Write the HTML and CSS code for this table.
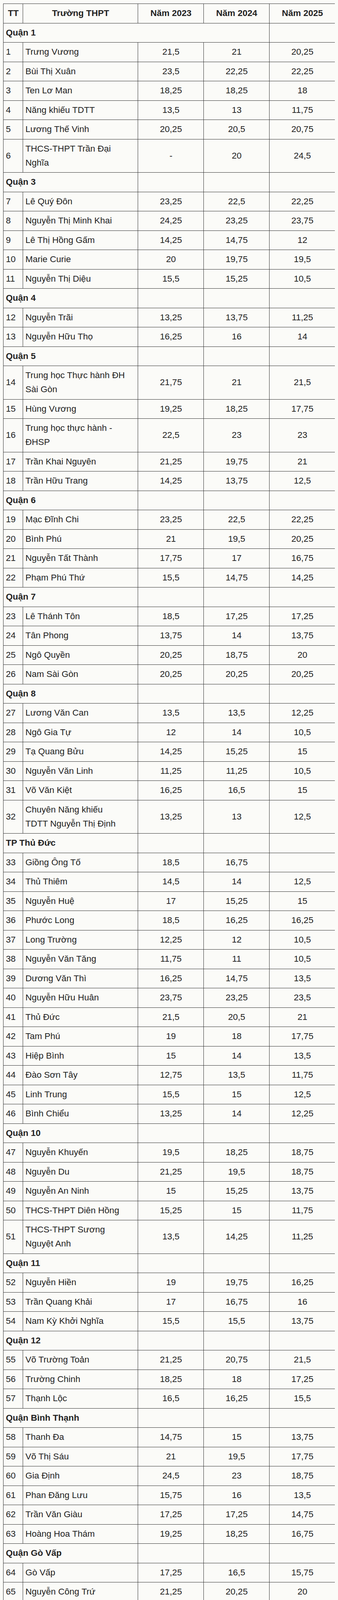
FILE: index.html
```html
<!DOCTYPE html>
<html lang="vi">
<head>
<meta charset="utf-8">
<title>Điểm chuẩn lớp 10</title>
<link rel="stylesheet" href="styles.css">
</head>
<body>
<table class="scores">
<colgroup><col class="c-tt"><col class="c-name"><col class="c-y"><col class="c-y"><col class="c-y"></colgroup>
<thead>
<tr><th>TT</th><th>Trường THPT</th><th>Năm 2023</th><th>Năm 2024</th><th>Năm 2025</th></tr>
</thead>
<tbody>
<tr><td class="district" colspan="4">Quận 1</td><td></td></tr>
<tr><td>1</td><td>Trưng Vương</td><td class="v">21,5</td><td class="v">21</td><td class="v">20,25</td></tr>
<tr><td>2</td><td>Bùi Thị Xuân</td><td class="v">23,5</td><td class="v">22,25</td><td class="v">22,25</td></tr>
<tr><td>3</td><td>Ten Lơ Man</td><td class="v">18,25</td><td class="v">18,25</td><td class="v">18</td></tr>
<tr><td>4</td><td>Năng khiếu TDTT</td><td class="v">13,5</td><td class="v">13</td><td class="v">11,75</td></tr>
<tr><td>5</td><td>Lương Thế Vinh</td><td class="v">20,25</td><td class="v">20,5</td><td class="v">20,75</td></tr>
<tr><td>6</td><td>THCS-THPT Trần Đại<br>Nghĩa</td><td class="v">-</td><td class="v">20</td><td class="v">24,5</td></tr>
<tr><td class="district" colspan="2">Quận 3</td><td></td><td></td><td></td></tr>
<tr><td>7</td><td>Lê Quý Đôn</td><td class="v">23,25</td><td class="v">22,5</td><td class="v">22,25</td></tr>
<tr><td>8</td><td>Nguyễn Thị Minh Khai</td><td class="v">24,25</td><td class="v">23,25</td><td class="v">23,75</td></tr>
<tr><td>9</td><td>Lê Thị Hồng Gấm</td><td class="v">14,25</td><td class="v">14,75</td><td class="v">12</td></tr>
<tr><td>10</td><td>Marie Curie</td><td class="v">20</td><td class="v">19,75</td><td class="v">19,5</td></tr>
<tr><td>11</td><td>Nguyễn Thị Diệu</td><td class="v">15,5</td><td class="v">15,25</td><td class="v">10,5</td></tr>
<tr><td class="district" colspan="2">Quận 4</td><td></td><td></td><td></td></tr>
<tr><td>12</td><td>Nguyễn Trãi</td><td class="v">13,25</td><td class="v">13,75</td><td class="v">11,25</td></tr>
<tr><td>13</td><td>Nguyễn Hữu Thọ</td><td class="v">16,25</td><td class="v">16</td><td class="v">14</td></tr>
<tr><td class="district" colspan="2">Quận 5</td><td></td><td></td><td></td></tr>
<tr><td>14</td><td>Trung học Thực hành ĐH<br>Sài Gòn</td><td class="v">21,75</td><td class="v">21</td><td class="v">21,5</td></tr>
<tr><td>15</td><td>Hùng Vương</td><td class="v">19,25</td><td class="v">18,25</td><td class="v">17,75</td></tr>
<tr><td>16</td><td>Trung học thực hành -<br>ĐHSP</td><td class="v">22,5</td><td class="v">23</td><td class="v">23</td></tr>
<tr><td>17</td><td>Trần Khai Nguyên</td><td class="v">21,25</td><td class="v">19,75</td><td class="v">21</td></tr>
<tr><td>18</td><td>Trần Hữu Trang</td><td class="v">14,25</td><td class="v">13,75</td><td class="v">12,5</td></tr>
<tr><td class="district" colspan="2">Quận 6</td><td></td><td></td><td></td></tr>
<tr><td>19</td><td>Mạc Đĩnh Chi</td><td class="v">23,25</td><td class="v">22,5</td><td class="v">22,25</td></tr>
<tr><td>20</td><td>Bình Phú</td><td class="v">21</td><td class="v">19,5</td><td class="v">20,25</td></tr>
<tr><td>21</td><td>Nguyễn Tất Thành</td><td class="v">17,75</td><td class="v">17</td><td class="v">16,75</td></tr>
<tr><td>22</td><td>Phạm Phú Thứ</td><td class="v">15,5</td><td class="v">14,75</td><td class="v">14,25</td></tr>
<tr><td class="district" colspan="2">Quận 7</td><td></td><td></td><td></td></tr>
<tr><td>23</td><td>Lê Thánh Tôn</td><td class="v">18,5</td><td class="v">17,25</td><td class="v">17,25</td></tr>
<tr><td>24</td><td>Tân Phong</td><td class="v">13,75</td><td class="v">14</td><td class="v">13,75</td></tr>
<tr><td>25</td><td>Ngô Quyền</td><td class="v">20,25</td><td class="v">18,75</td><td class="v">20</td></tr>
<tr><td>26</td><td>Nam Sài Gòn</td><td class="v">20,25</td><td class="v">20,25</td><td class="v">20,25</td></tr>
<tr><td class="district" colspan="2">Quận 8</td><td></td><td></td><td></td></tr>
<tr><td>27</td><td>Lương Văn Can</td><td class="v">13,5</td><td class="v">13,5</td><td class="v">12,25</td></tr>
<tr><td>28</td><td>Ngô Gia Tự</td><td class="v">12</td><td class="v">14</td><td class="v">10,5</td></tr>
<tr><td>29</td><td>Tạ Quang Bửu</td><td class="v">14,25</td><td class="v">15,25</td><td class="v">15</td></tr>
<tr><td>30</td><td>Nguyễn Văn Linh</td><td class="v">11,25</td><td class="v">11,25</td><td class="v">10,5</td></tr>
<tr><td>31</td><td>Võ Văn Kiệt</td><td class="v">16,25</td><td class="v">16,5</td><td class="v">15</td></tr>
<tr><td>32</td><td>Chuyên Năng khiếu<br>TDTT Nguyễn Thị Định</td><td class="v">13,25</td><td class="v">13</td><td class="v">12,5</td></tr>
<tr><td class="district" colspan="2">TP Thủ Đức</td><td></td><td></td><td></td></tr>
<tr><td>33</td><td>Giồng Ông Tố</td><td class="v">18,5</td><td class="v">16,75</td><td class="v"></td></tr>
<tr><td>34</td><td>Thủ Thiêm</td><td class="v">14,5</td><td class="v">14</td><td class="v">12,5</td></tr>
<tr><td>35</td><td>Nguyễn Huệ</td><td class="v">17</td><td class="v">15,25</td><td class="v">15</td></tr>
<tr><td>36</td><td>Phước Long</td><td class="v">18,5</td><td class="v">16,25</td><td class="v">16,25</td></tr>
<tr><td>37</td><td>Long Trường</td><td class="v">12,25</td><td class="v">12</td><td class="v">10,5</td></tr>
<tr><td>38</td><td>Nguyễn Văn Tăng</td><td class="v">11,75</td><td class="v">11</td><td class="v">10,5</td></tr>
<tr><td>39</td><td>Dương Văn Thì</td><td class="v">16,25</td><td class="v">14,75</td><td class="v">13,5</td></tr>
<tr><td>40</td><td>Nguyễn Hữu Huân</td><td class="v">23,75</td><td class="v">23,25</td><td class="v">23,5</td></tr>
<tr><td>41</td><td>Thủ Đức</td><td class="v">21,5</td><td class="v">20,5</td><td class="v">21</td></tr>
<tr><td>42</td><td>Tam Phú</td><td class="v">19</td><td class="v">18</td><td class="v">17,75</td></tr>
<tr><td>43</td><td>Hiệp Bình</td><td class="v">15</td><td class="v">14</td><td class="v">13,5</td></tr>
<tr><td>44</td><td>Đào Sơn Tây</td><td class="v">12,75</td><td class="v">13,5</td><td class="v">11,75</td></tr>
<tr><td>45</td><td>Linh Trung</td><td class="v">15,5</td><td class="v">15</td><td class="v">12,5</td></tr>
<tr><td>46</td><td>Bình Chiểu</td><td class="v">13,25</td><td class="v">14</td><td class="v">12,25</td></tr>
<tr><td class="district" colspan="2">Quận 10</td><td></td><td></td><td></td></tr>
<tr><td>47</td><td>Nguyễn Khuyến</td><td class="v">19,5</td><td class="v">18,25</td><td class="v">18,75</td></tr>
<tr><td>48</td><td>Nguyễn Du</td><td class="v">21,25</td><td class="v">19,5</td><td class="v">18,75</td></tr>
<tr><td>49</td><td>Nguyễn An Ninh</td><td class="v">15</td><td class="v">15,25</td><td class="v">13,75</td></tr>
<tr><td>50</td><td>THCS-THPT Diên Hồng</td><td class="v">15,25</td><td class="v">15</td><td class="v">11,75</td></tr>
<tr><td>51</td><td>THCS-THPT Sương<br>Nguyệt Anh</td><td class="v">13,5</td><td class="v">14,25</td><td class="v">11,25</td></tr>
<tr><td class="district" colspan="2">Quận 11</td><td></td><td></td><td></td></tr>
<tr><td>52</td><td>Nguyễn Hiền</td><td class="v">19</td><td class="v">19,75</td><td class="v">16,25</td></tr>
<tr><td>53</td><td>Trần Quang Khải</td><td class="v">17</td><td class="v">16,75</td><td class="v">16</td></tr>
<tr><td>54</td><td>Nam Kỳ Khởi Nghĩa</td><td class="v">15,5</td><td class="v">15,5</td><td class="v">13,75</td></tr>
<tr><td class="district" colspan="2">Quận 12</td><td></td><td></td><td></td></tr>
<tr><td>55</td><td>Võ Trường Toản</td><td class="v">21,25</td><td class="v">20,75</td><td class="v">21,5</td></tr>
<tr><td>56</td><td>Trường Chinh</td><td class="v">18,25</td><td class="v">18</td><td class="v">17,25</td></tr>
<tr><td>57</td><td>Thạnh Lộc</td><td class="v">16,5</td><td class="v">16,25</td><td class="v">15,5</td></tr>
<tr><td class="district" colspan="2">Quận Bình Thạnh</td><td></td><td></td><td></td></tr>
<tr><td>58</td><td>Thanh Đa</td><td class="v">14,75</td><td class="v">15</td><td class="v">13,75</td></tr>
<tr><td>59</td><td>Võ Thị Sáu</td><td class="v">21</td><td class="v">19,5</td><td class="v">17,75</td></tr>
<tr><td>60</td><td>Gia Định</td><td class="v">24,5</td><td class="v">23</td><td class="v">18,75</td></tr>
<tr><td>61</td><td>Phan Đăng Lưu</td><td class="v">15,75</td><td class="v">16</td><td class="v">13,5</td></tr>
<tr><td>62</td><td>Trần Văn Giàu</td><td class="v">17,25</td><td class="v">17,25</td><td class="v">14,75</td></tr>
<tr><td>63</td><td>Hoàng Hoa Thám</td><td class="v">19,25</td><td class="v">18,25</td><td class="v">16,75</td></tr>
<tr><td class="district" colspan="2">Quận Gò Vấp</td><td></td><td></td><td></td></tr>
<tr><td>64</td><td>Gò Vấp</td><td class="v">17,25</td><td class="v">16,5</td><td class="v">15,75</td></tr>
<tr><td>65</td><td>Nguyễn Công Trứ</td><td class="v">21,25</td><td class="v">20,25</td><td class="v">20</td></tr>
<tr><td>66</td><td>Trần Hưng Đạo</td><td class="v">20,5</td><td class="v">19,75</td><td class="v">20,25</td></tr>
<tr><td>67</td><td>Nguyễn Trung Trực</td><td class="v">18,25</td><td class="v">17,25</td><td class="v">17,25</td></tr>
<tr><td class="district" colspan="2">Quận Phú Nhuận</td><td></td><td></td><td></td></tr>
<tr><td>68</td><td>Phú Nhuận</td><td class="v">23,5</td><td class="v">22,5</td><td class="v">22,5</td></tr>
<tr><td>69</td><td>Hàn Thuyên</td><td class="v">15,25</td><td class="v">15,25</td><td class="v">13,5</td></tr>
<tr><td class="district" colspan="2">Quận Tân Bình</td><td></td><td></td><td></td></tr>
<tr><td>70</td><td>Tân Bình</td><td class="v">20,25</td><td class="v">19,5</td><td class="v">19,75</td></tr>
<tr><td>71</td><td>Nguyễn Chí Thanh</td><td class="v">20,25</td><td class="v">18,25</td><td class="v">18</td></tr>
<tr><td>72</td><td>Nguyễn Thượng Hiền</td><td class="v">25,5</td><td class="v">24,25</td><td class="v">23,5</td></tr>
<tr><td>73</td><td>Nguyễn Thái Bình</td><td class="v">17,25</td><td class="v">17</td><td class="v">16,25</td></tr>
<tr><td class="district" colspan="2">Quận Tân Phú</td><td></td><td></td><td></td></tr>
<tr><td>74</td><td>Trần Phú</td><td class="v">23,5</td><td class="v">23,25</td><td class="v">22,75</td></tr>
<tr><td>75</td><td>Tây Thạnh</td><td class="v">21,75</td><td class="v">21</td><td class="v">21,75</td></tr>
<tr><td>76</td><td>Lê Trọng Tấn</td><td class="v">20,25</td><td class="v">19,5</td><td class="v">18,5</td></tr>
<tr><td class="district" colspan="2">Quận Bình Tân</td><td></td><td></td><td></td></tr>
<tr><td>77</td><td>Vĩnh Lộc</td><td class="v">17</td><td class="v">16,5</td><td class="v">16,75</td></tr>
<tr><td>78</td><td>Nguyễn Hữu Cảnh</td><td class="v">19</td><td class="v">18</td><td class="v">18,25</td></tr>
<tr><td>79</td><td>Bình Hưng Hòa</td><td class="v">18,25</td><td class="v">18,5</td><td class="v">17,75</td></tr>
<tr><td>80</td><td>Bình Tân</td><td class="v">15,25</td><td class="v">15</td><td class="v">14,25</td></tr>
<tr><td>81</td><td>An Lạc</td><td class="v">15,75</td><td class="v">15,25</td><td class="v">15,25</td></tr>
<tr><td class="district" colspan="2">Huyện Bình Chánh</td><td></td><td></td><td></td></tr>
<tr><td>82</td><td>Bình Chánh</td><td class="v">12</td><td class="v">13,5</td><td class="v">10,75</td></tr>
<tr><td>83</td><td>Tân Túc</td><td class="v">12,75</td><td class="v">14</td><td class="v">10,5</td></tr>
<tr><td>84</td><td>Vĩnh Lộc B</td><td class="v">14,25</td><td class="v">15,75</td><td class="v">13,75</td></tr>
<tr><td>85</td><td>Năng khiếu TDTT Bình<br>Chánh</td><td class="v">11,5</td><td class="v">14</td><td class="v">12</td></tr>
<tr><td>86</td><td>Phong Phú</td><td class="v">11</td><td class="v">12,5</td><td class="v">10,5</td></tr>
<tr><td>87</td><td>Lê Minh Xuân</td><td class="v">13,25</td><td class="v">15</td><td class="v">12,75</td></tr>
<tr><td>88</td><td>Đa Phước</td><td class="v">10,5</td><td class="v">11,5</td><td class="v">10,5</td></tr>
<tr><td class="district" colspan="2">Huyện Cần Giờ</td><td></td><td></td><td></td></tr>
<tr><td>89</td><td>THCS-THPT Thạnh An</td><td class="v">10,5</td><td class="v">-</td><td class="v">-</td></tr>
<tr><td>90</td><td>Bình Khánh</td><td class="v">10,5</td><td class="v">10,5</td><td class="v">10,5</td></tr>
<tr><td>91</td><td>Cần Thạnh</td><td class="v">10,5</td><td class="v">10,5</td><td class="v">10,5</td></tr>
<tr><td>92</td><td>An Nghĩa</td><td class="v">10,5</td><td class="v">10,5</td><td class="v">10,5</td></tr>
<tr><td class="district" colspan="2">Huyện Củ Chi</td><td></td><td></td><td></td></tr>
<tr><td>93</td><td>Củ Chi</td><td class="v">14,75</td><td class="v">16,25</td><td class="v">12,25</td></tr>
<tr><td>94</td><td>Quang Trung</td><td class="v">11,25</td><td class="v">13</td><td class="v">11,5</td></tr>
<tr><td>95</td><td>An Nhơn Tây</td><td class="v">10,5</td><td class="v">11,5</td><td class="v">10,5</td></tr>
<tr><td>96</td><td>Trung Phú</td><td class="v">14,75</td><td class="v">15,5</td><td class="v">14,25</td></tr>
<tr><td>97</td><td>Trung Lập</td><td class="v">10,5</td><td class="v">11,75</td><td class="v">10,5</td></tr>
<tr><td>98</td><td>Phú Hòa</td><td class="v">12</td><td class="v">13,5</td><td class="v">11,75</td></tr>
<tr><td>99</td><td>Tân Thông Hội</td><td class="v">14</td><td class="v">14,75</td><td class="v">14</td></tr>
<tr><td class="district" colspan="2">Huyện Hóc Môn</td><td></td><td></td><td></td></tr>
<tr><td>100</td><td>Nguyễn Hữu Cầu</td><td class="v">23</td><td class="v">22,5</td><td class="v">23</td></tr>
<tr><td>101</td><td>Lý Thường Kiệt</td><td class="v">19,75</td><td class="v">19,75</td><td class="v">20,25</td></tr>
<tr><td>102</td><td>Bà Điểm</td><td class="v">18,75</td><td class="v">18,5</td><td class="v">19</td></tr>
<tr><td>103</td><td>Nguyễn Văn Cừ</td><td class="v">15</td><td class="v">16,5</td><td class="v">14,75</td></tr>
<tr><td>104</td><td>Nguyễn Hữu Tiến</td><td class="v">18</td><td class="v">18</td><td class="v">17,5</td></tr>
<tr><td>105</td><td>Phạm Văn Sáng</td><td class="v">16,25</td><td class="v">16,75</td><td class="v">16,25</td></tr>
<tr><td>106</td><td>Hồ Thị Bi</td><td class="v">16,5</td><td class="v">17,5</td><td class="v">17</td></tr>
<tr><td></td><td class="district">Huyện Nhà Bè</td><td></td><td></td><td></td></tr>
<tr><td>107</td><td>Long Thới</td><td class="v">12,75</td><td class="v">12,25</td><td class="v">12</td></tr>
<tr><td>108</td><td>Phước Kiển</td><td class="v">11,25</td><td class="v">12,75</td><td class="v">10,75</td></tr>
<tr><td>109</td><td>Dương Văn Dương</td><td class="v">13</td><td class="v">13</td><td class="v">10,5</td></tr>
<tr><td>110</td><td>THPT Bình Trị Đông B<br>(THPT Hoàng Thế Thiện)</td><td class="v">-</td><td class="v">-</td><td class="v">13</td></tr>
</tbody>
</table>
</body>
</html>
```

FILE: styles.css
```css
html, body {
  background: #fbfbf8;
}
body {
  margin: 9px 8px 6px 8px;
  color: #222;
  font-family: "Liberation Sans", Arial, sans-serif;
  font-size: 22.5px;
}
.scores {
  width: 848px;
  table-layout: fixed;
  border-collapse: collapse;
}
.c-tt { width: 50px; }
.c-name { width: 294px; }
.c-y { width: 168px; }
.scores th,
.scores td {
  border: 1px solid #333;
  padding: 6.25px 5px 6.25px 6px;
  line-height: 36px;
  text-align: left;
  vertical-align: middle;
  font-weight: normal;
  white-space: nowrap;
}
.scores th {
  font-weight: bold;
  text-align: center;
}
.scores td.v {
  text-align: center;
}
.scores td.district {
  font-weight: bold;
}
```
